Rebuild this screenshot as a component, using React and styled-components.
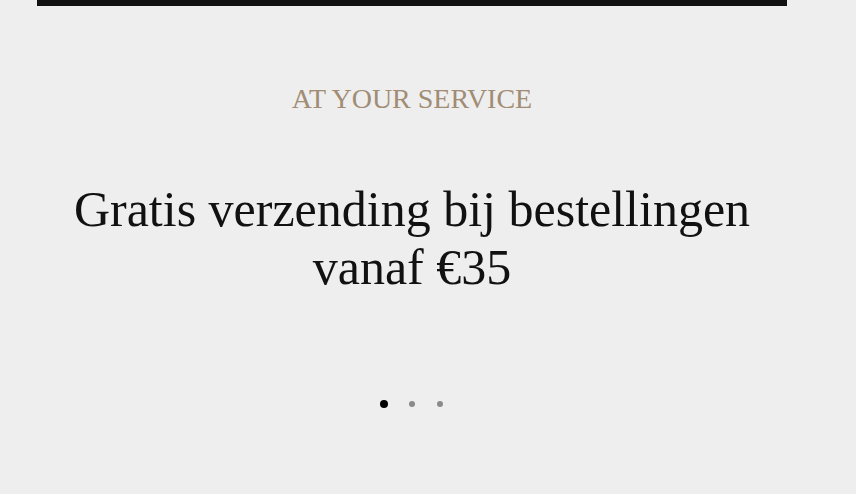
import styled, { createGlobalStyle } from 'styled-components';

const GlobalStyle = createGlobalStyle`
  html, body {
    margin: 0;
    padding: 0;
    background: #eeeeee;
  }
  body {
    font-family: "Liberation Serif", "Times New Roman", serif;
  }
`

const Page = styled.div`
  width: 856px;
  height: 494px;
  background: #eeeeee;
  overflow: hidden;
`
const Section = styled.section`
  width: 750px;
  margin-left: 37px;
  display: flex;
  flex-direction: column;
  align-items: center;
`
const TopBar = styled.div`
  width: 100%;
  height: 6px;
  background: #111111;
`
const Eyebrow = styled.div`
  margin-top: 76px;
  font-size: 28px;
  line-height: 1.2;
  color: #a18c74;
`
const Headline = styled.h2`
  margin: 64px 0 0;
  font-weight: normal;
  font-size: 50px;
  line-height: 58px;
  color: #111111;
  text-align: center;
  width: 720px;
`
const Dots = styled.div`
  margin-top: 104px;
  display: flex;
  align-items: center;
  gap: 20px;
`
const Dot = styled.span`
  width: ${props => props.active ? '8px' : '6px'};
  height: ${props => props.active ? '8px' : '6px'};
  margin: ${props => props.active ? '0' : '1px'};
  border-radius: 50%;
  background: ${props => props.active ? '#000000' : '#8a8a8a'};
`

export default function App() {
  return (
    <Page>
      <GlobalStyle />
      <Section>
        <TopBar />
        <Eyebrow>AT YOUR SERVICE</Eyebrow>
        <Headline>Gratis verzending bij bestellingen vanaf €35</Headline>
        <Dots>
          {[0, 1, 2].map(i => <Dot key={i} active={i === 0} />)}
        </Dots>
      </Section>
    </Page>
  )
}
